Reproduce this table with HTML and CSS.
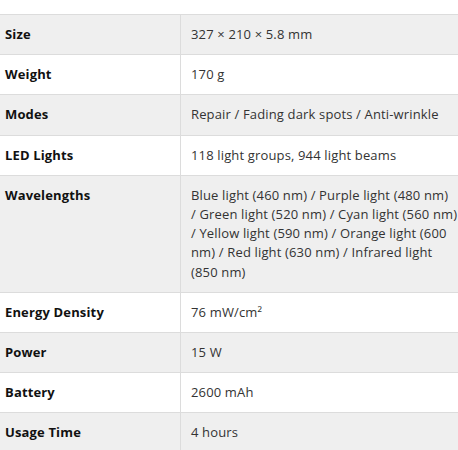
FILE: index.html
```html
<!DOCTYPE html>
<html>
<head>
<meta charset="utf-8">
<link rel="stylesheet" href="styles.css">
</head>
<body>
<div class="wrap">
<table class="specs">
<tbody>
<tr><th>Size</th><td>327 × 210 × 5.8 mm</td></tr>
<tr><th>Weight</th><td>170 g</td></tr>
<tr><th>Modes</th><td>Repair / Fading dark spots / Anti-wrinkle</td></tr>
<tr><th>LED Lights</th><td>118 light groups, 944 light beams</td></tr>
<tr><th>Wavelengths</th><td>Blue light (460 nm) /&nbsp;Purple light (480 nm) /&nbsp;Green light (520 nm) /&nbsp;Cyan light (560 nm) /&nbsp;Yellow light (590 nm) /&nbsp;Orange light (600 nm) /&nbsp;Red light (630 nm) /&nbsp;Infrared light (850&nbsp;nm)</td></tr>
<tr><th>Energy Density</th><td>76 mW/cm²</td></tr>
<tr><th>Power</th><td>15 W</td></tr>
<tr><th>Battery</th><td>2600 mAh</td></tr>
<tr><th>Usage Time</th><td>4 hours</td></tr>
</tbody>
</table>
</div>
</body>
</html>
```

FILE: styles.css
```css
html, body {
  margin: 0;
  padding: 0;
  background: #fff;
}
body {
  font-family: "Open Sans", "Liberation Sans", sans-serif;
  overflow: hidden;
}
.wrap {
  padding-top: 14px;
}
.specs {
  border-collapse: collapse;
  width: 480px;
  table-layout: fixed;
  font-size: 13px;
  letter-spacing: 0.15px;
  line-height: 19.2px;
}
.specs th,
.specs td {
  border-top: 1px solid #dcdcdc;
  border-bottom: 1px solid #dcdcdc;
  padding: 10px;
  vertical-align: top;
  text-align: left;
}
.specs th {
  width: 165px;
  padding-left: 5px;
  font-weight: 700;
  color: #111;
  border-right: 1px solid #dcdcdc;
}
.specs td {
  color: #333;
  padding-right: 18px;
}
.specs tr:nth-child(odd) {
  background: #efefef;
}
```
